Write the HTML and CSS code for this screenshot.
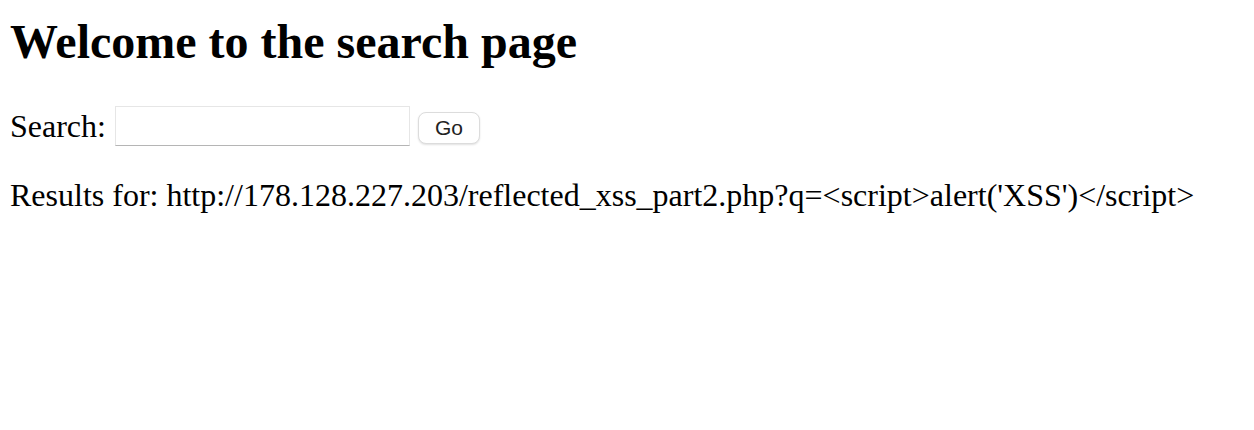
FILE: index.html
```html
<!DOCTYPE html>
<html>
<head>
<meta charset="utf-8">
<title>Search</title>
<link rel="stylesheet" href="styles.css">
</head>
<body>
<h1 class="title">Welcome to the search page</h1>
<form class="search-row">
  <label class="search-label" for="q">Search:</label>
  <input class="search-input" id="q" type="text">
  <button class="search-btn" type="button">Go</button>
</form>
<p class="results">Results for: http://178.128.227.203/reflected_xss_part2.php?q=&lt;script&gt;alert('XSS')&lt;/script&gt;</p>
</body>
</html>
```
FILE: styles.css
```css
html, body {
  margin: 0;
  padding: 0;
  background: #fff;
}
body {
  padding: 0 10px;
  font-family: "Liberation Serif", "Times New Roman", serif;
  font-size: 32px;
  color: #000;
}
.title {
  font-size: 48px;
  font-weight: bold;
  margin: 14px 0 0;
  line-height: 1.15;
}
.search-row {
  display: flex;
  align-items: center;
  margin: 37px 0 0;
  height: 40px;
}
.search-label {
  margin-right: 9px;
}
.search-input {
  box-sizing: border-box;
  width: 295px;
  height: 40px;
  margin: 0 8px 0 0;
  border: 1px solid #e6e6e6;
  border-bottom: 1px solid #b5b5b5;
  border-radius: 0;
  background: #fff;
  padding: 0 6px;
  font-size: 20px;
  outline: none;
}
.search-btn {
  box-sizing: border-box;
  width: 62px;
  height: 32px;
  margin-top: 4px;
  border: 1px solid #dcdcdc;
  border-radius: 8px;
  background: #fff;
  box-shadow: 0 1px 2px rgba(0,0,0,0.12);
  font-family: "Liberation Sans", Arial, sans-serif;
  font-size: 21px;
  color: #222;
  padding: 0;
}
.results {
  margin: 31px 0 0;
  line-height: 1.15;
}
```
